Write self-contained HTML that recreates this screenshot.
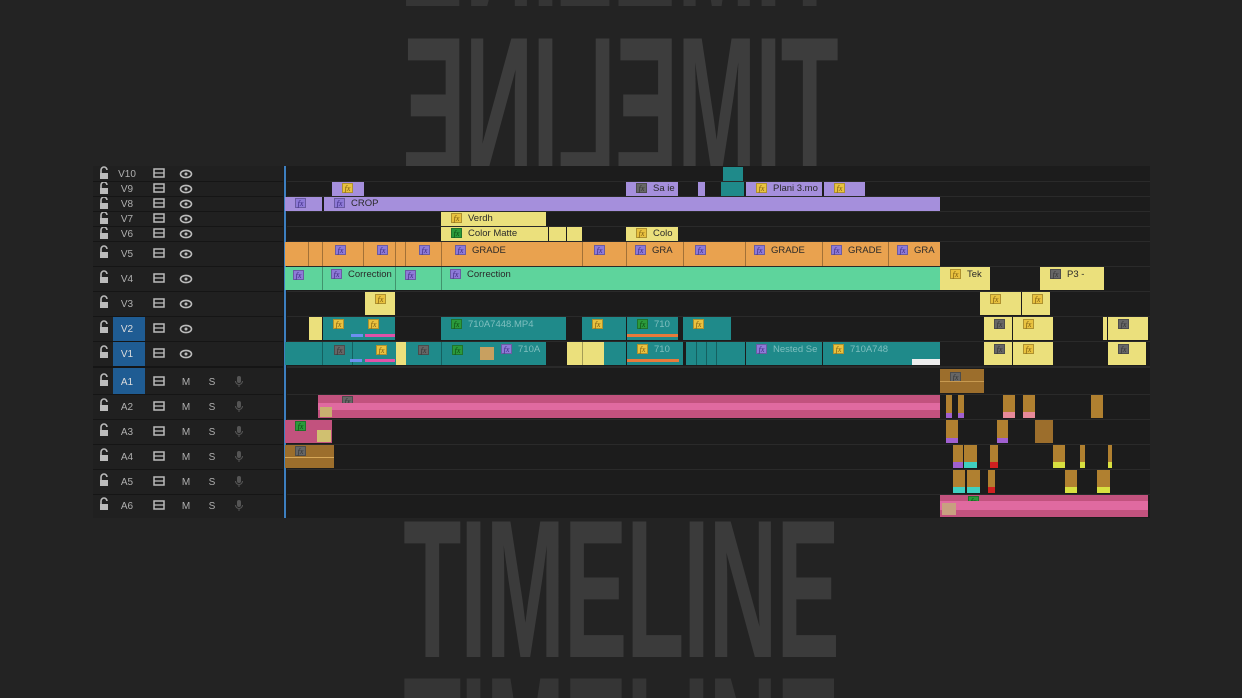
<!DOCTYPE html>
<html style="width:1242px;height:698px;overflow:hidden"><head><meta charset="utf-8"><style>
*{margin:0;padding:0;box-sizing:border-box}
body{width:1242px;height:698px;background:#232323;position:relative;overflow:hidden;font-family:"Liberation Sans",sans-serif}
.big{position:absolute;left:621px;font-weight:bold;font-size:197px;line-height:1;color:#3b3b3b;white-space:nowrap;letter-spacing:-2px}
.panel{position:absolute;left:93px;top:166px;width:1057px;height:352px;background:#1c1c1c}
.c{position:absolute;font-size:9.5px;color:#2a2a2a;white-space:nowrap;overflow:hidden;line-height:13px;padding-left:4px}
.f{display:inline-block;width:11px;height:10px;vertical-align:middle;margin:0 6px 1px 6px;border:1px solid rgba(0,0,0,.25);font-style:italic;font-size:8px;line-height:9px;text-align:center;font-family:"Liberation Serif",serif}
.y{background:#e9c23f;color:#7a5a10}.p{background:#8e7ad8;color:#3c2a80}.g{background:#2b9a3b;color:#0d4a12}.k{background:#666;color:#333}
.d{position:absolute;top:0;bottom:0;width:1px;background:rgba(0,0,0,.3)}
</style></head><body>

<div class="big" style="top:-160px;transform:translateX(-50%) scaleX(-0.482);color:#353535">TIMELINE</div>
<div class="big" style="top:8px;transform:translateX(-50%) scaleX(-0.482);color:#3d3d3d">TIMELINE</div>
<div class="big" style="top:491px;transform:translateX(-50%) scaleX(0.482)">TIMELINE</div>
<div class="big" style="top:648px;transform:translateX(-50%) scaleX(0.482);color:#353535">TIMELINE</div>

<div class="panel">
<div style="position:absolute;left:0;top:0;width:190px;height:352px;background:#202020"></div>
<div style="position:absolute;left:20px;top:150px;width:32px;height:50px;background:#1f5c93"></div>
<div style="position:absolute;left:20px;top:202px;width:32px;height:26px;background:#1f5c93"></div>
<div style="position:absolute;left:191px;top:0;width:2px;height:352px;background:#3d7fc0"></div>
</div>

<svg style="position:absolute;left:93px;top:166px" width="190" height="352" font-family="Liberation Sans" font-size="10">
<defs>
<g id="lk"><rect x="-4" y="-1" width="8" height="6" fill="#bbb"/><path d="M-3 -1 V-4 A3 3 0 0 1 3 -4" stroke="#bbb" stroke-width="1.6" fill="none"/></g>
<g id="tg"><rect x="-5" y="-4" width="10" height="8" fill="none" stroke="#bbb" stroke-width="1.5"/><path d="M-5 0H5" stroke="#bbb" stroke-width="1.3"/></g>
<g id="ey"><ellipse cx="0" cy="0" rx="5.5" ry="3.6" fill="none" stroke="#bbb" stroke-width="1.6"/><circle r="1.5" fill="#bbb"/></g>
<g id="mc"><rect x="-2" y="-5" width="4" height="7" rx="2" fill="#555"/><path d="M-3.5 0a3.5 3.5 0 0 0 7 0M0 3.5V6" stroke="#555" fill="none"/></g>
</defs>
<g fill="#b0b0b0" text-anchor="middle">
<use href="#lk" x="11" y="8"/><text x="34" y="11">V10</text><use href="#tg" x="66" y="7"/><use href="#ey" x="93" y="8"/>
<use href="#lk" x="11" y="23"/><text x="34" y="26">V9</text><use href="#tg" x="66" y="22"/><use href="#ey" x="93" y="23"/>
<use href="#lk" x="11" y="38"/><text x="34" y="41">V8</text><use href="#tg" x="66" y="37"/><use href="#ey" x="93" y="38"/>
<use href="#lk" x="11" y="53"/><text x="34" y="56">V7</text><use href="#tg" x="66" y="52"/><use href="#ey" x="93" y="53"/>
<use href="#lk" x="11" y="68"/><text x="34" y="71">V6</text><use href="#tg" x="66" y="67"/><use href="#ey" x="93" y="68"/>
<use href="#lk" x="11" y="87"/><text x="34" y="91">V5</text><use href="#tg" x="66" y="87"/><use href="#ey" x="93" y="88"/>
<use href="#lk" x="11" y="112"/><text x="34" y="116">V4</text><use href="#tg" x="66" y="112"/><use href="#ey" x="93" y="113"/>
<use href="#lk" x="11" y="137"/><text x="34" y="141">V3</text><use href="#tg" x="66" y="137"/><use href="#ey" x="93" y="138"/>
<use href="#lk" x="11" y="162"/><text x="34" y="166" fill="#ddd">V2</text><use href="#tg" x="66" y="162"/><use href="#ey" x="93" y="163"/>
<use href="#lk" x="11" y="187"/><text x="34" y="191" fill="#ddd">V1</text><use href="#tg" x="66" y="187"/><use href="#ey" x="93" y="188"/>
<use href="#lk" x="11" y="215"/><text x="34" y="219" fill="#ddd">A1</text><use href="#tg" x="66" y="215"/><text x="93" y="219">M</text><text x="119" y="219">S</text><use href="#mc" x="146" y="215"/>
<use href="#lk" x="11" y="240"/><text x="34" y="244">A2</text><use href="#tg" x="66" y="240"/><text x="93" y="244">M</text><text x="119" y="244">S</text><use href="#mc" x="146" y="240"/>
<use href="#lk" x="11" y="265"/><text x="34" y="269">A3</text><use href="#tg" x="66" y="265"/><text x="93" y="269">M</text><text x="119" y="269">S</text><use href="#mc" x="146" y="265"/>
<use href="#lk" x="11" y="290"/><text x="34" y="294">A4</text><use href="#tg" x="66" y="290"/><text x="93" y="294">M</text><text x="119" y="294">S</text><use href="#mc" x="146" y="290"/>
<use href="#lk" x="11" y="315"/><text x="34" y="319">A5</text><use href="#tg" x="66" y="315"/><text x="93" y="319">M</text><text x="119" y="319">S</text><use href="#mc" x="146" y="315"/>
<use href="#lk" x="11" y="339"/><text x="34" y="343">A6</text><use href="#tg" x="66" y="339"/><text x="93" y="343">M</text><text x="119" y="343">S</text><use href="#mc" x="146" y="339"/>
</g>
<g fill="#151515">
<rect y="15" width="190" height="1"/><rect y="30" width="190" height="1"/><rect y="45" width="190" height="1"/><rect y="60" width="190" height="1"/><rect y="75" width="190" height="1"/><rect y="100" width="190" height="1"/><rect y="125" width="190" height="1"/><rect y="150" width="190" height="1"/><rect y="175" width="190" height="1"/><rect y="200" width="190" height="2"/><rect y="228" width="190" height="1"/><rect y="253" width="190" height="1"/><rect y="278" width="190" height="1"/><rect y="303" width="190" height="1"/><rect y="328" width="190" height="1"/>
</g>
</svg>

<svg style="position:absolute;left:287px;top:166px" width="863" height="352"><g fill="#2a2a2a">
<rect y="15" width="863" height="1"/><rect y="30" width="863" height="1"/><rect y="45" width="863" height="1"/><rect y="60" width="863" height="1"/><rect y="75" width="863" height="1"/><rect y="100" width="863" height="1"/><rect y="125" width="863" height="1"/><rect y="150" width="863" height="1"/><rect y="175" width="863" height="1"/><rect y="200" width="863" height="2"/><rect y="228" width="863" height="1"/><rect y="253" width="863" height="1"/><rect y="278" width="863" height="1"/><rect y="303" width="863" height="1"/><rect y="328" width="863" height="1"/></g></svg>

<!-- V10 -->
<div class="c" style="left:723px;top:167px;width:20px;height:14px;background:#1f8a8a"></div>
<!-- V9 -->
<div class="c" style="left:332px;top:182px;width:32px;height:14px;background:#a58fdc"><span class="f y">fx</span></div>
<div class="c" style="left:626px;top:182px;width:52px;height:14px;background:#a58fdc"><span class="f k">fx</span>Sa ie</div>
<div class="c" style="left:698px;top:182px;width:7px;height:14px;background:#a58fdc"></div>
<div class="c" style="left:721px;top:182px;width:23px;height:14px;background:#1f8a8a"></div>
<div class="c" style="left:746px;top:182px;width:76px;height:14px;background:#a58fdc"><span class="f y">fx</span>Plani 3.mo</div>
<div class="c" style="left:824px;top:182px;width:41px;height:14px;background:#a58fdc"><span class="f y">fx</span></div>
<!-- V8 -->
<div class="c" style="left:285px;top:197px;width:37px;height:14px;background:#a58fdc"><span class="f p">fx</span></div>
<div class="c" style="left:324px;top:197px;width:616px;height:14px;background:#a58fdc"><span class="f p">fx</span>CROP</div>
<!-- V7 -->
<div class="c" style="left:441px;top:212px;width:105px;height:14px;background:#ebe07c"><span class="f y">fx</span>Verdh</div>
<!-- V6 -->
<div class="c" style="left:441px;top:227px;width:107px;height:14px;background:#ebe07c"><span class="f g">fx</span>Color Matte</div>
<div class="c" style="left:549px;top:227px;width:17px;height:14px;background:#ebe07c"></div>
<div class="c" style="left:567px;top:227px;width:15px;height:14px;background:#ebe07c"></div>
<div class="c" style="left:626px;top:227px;width:52px;height:14px;background:#ebe07c"><span class="f y">fx</span>Colo</div>
<!-- V5 -->
<div class="c" style="left:285px;top:242px;width:655px;height:24px;background:#e9a24f;line-height:17px">
<div class="d" style="left:23px"></div><div class="d" style="left:37px"></div><div class="d" style="left:78px"></div><div class="d" style="left:110px"></div><div class="d" style="left:120px"></div><div class="d" style="left:156px"></div><div class="d" style="left:297px"></div><div class="d" style="left:341px"></div><div class="d" style="left:398px"></div><div class="d" style="left:460px"></div><div class="d" style="left:537px"></div><div class="d" style="left:603px"></div>
<span class="f p" style="position:absolute;left:44px;top:3px">fx</span><span class="f p" style="position:absolute;left:86px;top:3px">fx</span><span class="f p" style="position:absolute;left:128px;top:3px">fx</span>
<span style="position:absolute;left:164px"><span class="f p">fx</span>GRADE</span>
<span class="f p" style="position:absolute;left:303px;top:3px">fx</span>
<span style="position:absolute;left:344px"><span class="f p">fx</span>GRA</span>
<span class="f p" style="position:absolute;left:404px;top:3px">fx</span>
<span style="position:absolute;left:463px"><span class="f p">fx</span>GRADE</span>
<span style="position:absolute;left:540px"><span class="f p">fx</span>GRADE</span>
<span style="position:absolute;left:606px"><span class="f p">fx</span>GRA</span>
</div>
<!-- V4 -->
<div class="c" style="left:285px;top:267px;width:655px;height:23px;background:#5ed49c;line-height:16px">
<div class="d" style="left:37px"></div><div class="d" style="left:110px"></div><div class="d" style="left:156px"></div>
<span class="f p" style="position:absolute;left:2px;top:3px">fx</span>
<span style="position:absolute;left:40px"><span class="f p">fx</span>Correction</span>
<span class="f p" style="position:absolute;left:114px;top:3px">fx</span>
<span style="position:absolute;left:159px"><span class="f p">fx</span>Correction</span>
</div>
<div class="c" style="left:940px;top:267px;width:50px;height:23px;background:#ebe07c;line-height:16px"><span class="f y">fx</span>Tek</div>
<div class="c" style="left:1040px;top:267px;width:64px;height:23px;background:#ebe07c;line-height:16px"><span class="f k">fx</span>P3 -</div>
<!-- V3 -->
<div class="c" style="left:365px;top:292px;width:30px;height:23px;background:#ebe07c;line-height:16px"><span class="f y">fx</span></div>
<div class="c" style="left:980px;top:292px;width:41px;height:23px;background:#ebe07c;line-height:16px"><span class="f y">fx</span></div>
<div class="c" style="left:1022px;top:292px;width:28px;height:23px;background:#ebe07c;line-height:16px"><span class="f y">fx</span></div>
<!-- V2 -->
<div class="c" style="left:309px;top:317px;width:13px;height:23px;background:#ebe07c"></div>
<div class="c" style="left:323px;top:317px;width:72px;height:23px;background:#1f8a8a;line-height:16px"><span class="f y">fx</span><span class="f y" style="margin-left:18px">fx</span>
<div style="position:absolute;left:28px;bottom:3px;width:12px;height:3px;background:#6d8ff0"></div><div style="position:absolute;left:42px;bottom:3px;width:30px;height:3px;background:#e052a8"></div></div>
<div class="c" style="left:441px;top:317px;width:125px;height:23px;background:#1f8a8a;line-height:16px;color:#7fbfbf"><span class="f g">fx</span>710A7448.MP4</div>
<div class="c" style="left:582px;top:317px;width:44px;height:23px;background:#1f8a8a;line-height:16px"><span class="f y">fx</span></div>
<div class="c" style="left:627px;top:317px;width:51px;height:23px;background:#1f8a8a;line-height:16px;color:#7fbfbf"><span class="f g">fx</span>710<div style="position:absolute;left:0;right:0;bottom:3px;height:3px;background:#e87a3a"></div></div>
<div class="c" style="left:683px;top:317px;width:48px;height:23px;background:#1f8a8a;line-height:16px"><span class="f y">fx</span></div>
<div class="c" style="left:984px;top:317px;width:28px;height:23px;background:#ebe07c;line-height:16px"><span class="f k">fx</span></div>
<div class="c" style="left:1013px;top:317px;width:40px;height:23px;background:#ebe07c;line-height:16px"><span class="f y">fx</span></div>
<div class="c" style="left:1103px;top:317px;width:3px;height:23px;background:#ebe07c"></div>
<div class="c" style="left:1108px;top:317px;width:40px;height:23px;background:#ebe07c;line-height:16px"><span class="f k">fx</span></div>
<!-- V1 -->
<div class="c" style="left:285px;top:342px;width:261px;height:23px;background:#1f8a8a;line-height:16px;color:#7fbfbf">
<div class="d" style="left:37px"></div><div class="d" style="left:67px"></div><div class="d" style="left:156px"></div>
<div style="position:absolute;left:111px;top:0;width:10px;height:23px;background:#ebe07c"></div>
<span class="f k" style="position:absolute;left:43px;top:3px">fx</span><span class="f y" style="position:absolute;left:85px;top:3px">fx</span><span class="f k" style="position:absolute;left:127px;top:3px">fx</span><span class="f g" style="position:absolute;left:161px;top:3px">fx</span>
<div style="position:absolute;left:195px;top:5px;width:14px;height:13px;background:#c8a060"></div>
<span style="position:absolute;left:210px"><span class="f p">fx</span>710A</span>
<div style="position:absolute;left:65px;bottom:3px;width:12px;height:3px;background:#6d8ff0"></div><div style="position:absolute;left:80px;bottom:3px;width:30px;height:3px;background:#e052a8"></div>
</div>
<div class="c" style="left:567px;top:342px;width:37px;height:23px;background:#ebe07c"><div class="d" style="left:15px"></div></div>
<div class="c" style="left:604px;top:342px;width:22px;height:23px;background:#1f8a8a"></div>
<div class="c" style="left:627px;top:342px;width:56px;height:23px;background:#1f8a8a;line-height:16px;color:#7fbfbf"><span class="f y">fx</span>710<div style="position:absolute;left:0;right:4px;bottom:3px;height:3px;background:#e87a3a"></div></div>
<div class="c" style="left:686px;top:342px;width:59px;height:23px;background:#1f8a8a"><div class="d" style="left:10px"></div><div class="d" style="left:20px"></div><div class="d" style="left:30px"></div></div>
<div class="c" style="left:746px;top:342px;width:76px;height:23px;background:#1f8a8a;line-height:16px;color:#7fbfbf"><span class="f p">fx</span>Nested Se</div>
<div class="c" style="left:823px;top:342px;width:117px;height:23px;background:#1f8a8a;line-height:16px;color:#7fbfbf"><span class="f y">fx</span>710A748<div style="position:absolute;left:89px;right:0;bottom:0;height:6px;background:#eee"></div></div>
<div class="c" style="left:984px;top:342px;width:28px;height:23px;background:#ebe07c;line-height:16px"><span class="f k">fx</span></div>
<div class="c" style="left:1013px;top:342px;width:40px;height:23px;background:#ebe07c;line-height:16px"><span class="f y">fx</span></div>
<div class="c" style="left:1108px;top:342px;width:38px;height:23px;background:#ebe07c;line-height:16px"><span class="f k">fx</span></div>
<!-- audio -->
<div class="c" style="left:940px;top:369px;width:44px;height:24px;background:#9c6e2c;line-height:18px"><span class="f k">fx</span><div style="position:absolute;left:0;right:0;top:12px;height:1px;background:#c89a50"></div></div>
<div class="c" style="left:318px;top:395px;width:622px;height:23px;background:#c2527e;line-height:14px"><span class="f k" style="margin-left:20px">fx</span>
<div style="position:absolute;left:0;right:0;top:8px;height:7px;background:#e06aa0"></div><div style="position:absolute;left:2px;top:12px;width:12px;height:10px;background:#c8b070"></div></div>
<div class="c" style="left:285px;top:420px;width:47px;height:23px;background:#c2527e;line-height:14px"><span class="f g" style="margin-left:6px">fx</span><div style="position:absolute;left:32px;top:10px;width:14px;height:12px;background:#d0c070"></div></div>
<div class="c" style="left:285px;top:445px;width:49px;height:23px;background:#9c6e2c;line-height:14px"><span class="f k">fx</span><div style="position:absolute;left:0;right:0;top:12px;height:1px;background:#d8a858"></div></div>
<div class="c" style="left:940px;top:495px;width:208px;height:22px;background:#c2527e;line-height:14px"><span class="f g" style="margin-left:24px">fx</span><div style="position:absolute;left:0;right:0;top:6px;height:9px;background:#e06aa0"></div><div style="position:absolute;left:2px;top:8px;width:14px;height:12px;background:#c8a080"></div></div>
<!-- small audio clips -->
<div class="c" style="left:946px;top:395px;width:6px;height:23px;background:#b08030;border-bottom:5px solid #a060d0"></div>
<div class="c" style="left:958px;top:395px;width:6px;height:23px;background:#b08030;border-bottom:5px solid #a060d0"></div>
<div class="c" style="left:1003px;top:395px;width:12px;height:23px;background:#b08030;border-bottom:6px solid #e88a9a"></div>
<div class="c" style="left:1023px;top:395px;width:12px;height:23px;background:#b08030;border-bottom:6px solid #e88a9a"></div>
<div class="c" style="left:1091px;top:395px;width:12px;height:23px;background:#b08030"></div>
<div class="c" style="left:946px;top:420px;width:12px;height:23px;background:#b08030;border-bottom:5px solid #a060d0"></div>
<div class="c" style="left:997px;top:420px;width:11px;height:23px;background:#b08030;border-bottom:5px solid #a060d0"></div>
<div class="c" style="left:1035px;top:420px;width:18px;height:23px;background:#9c6e2c"></div>
<div class="c" style="left:953px;top:445px;width:10px;height:23px;background:#b08030;border-bottom:6px solid #a060d0"></div>
<div class="c" style="left:964px;top:445px;width:13px;height:23px;background:#b08030;border-bottom:6px solid #40d0c0"></div>
<div class="c" style="left:990px;top:445px;width:8px;height:23px;background:#b08030;border-bottom:6px solid #d02020"></div>
<div class="c" style="left:1053px;top:445px;width:12px;height:23px;background:#b08030;border-bottom:6px solid #d8e040"></div>
<div class="c" style="left:1080px;top:445px;width:5px;height:23px;background:#b08030;border-bottom:6px solid #d8e040"></div>
<div class="c" style="left:1108px;top:445px;width:3px;height:23px;background:#b08030;border-bottom:6px solid #d8e040"></div>
<div class="c" style="left:953px;top:470px;width:12px;height:23px;background:#b08030;border-bottom:6px solid #40d0c0"></div>
<div class="c" style="left:967px;top:470px;width:13px;height:23px;background:#b08030;border-bottom:6px solid #40d0c0"></div>
<div class="c" style="left:988px;top:470px;width:7px;height:23px;background:#b08030;border-bottom:6px solid #d02020"></div>
<div class="c" style="left:1065px;top:470px;width:12px;height:23px;background:#b08030;border-bottom:6px solid #d8e040"></div>
<div class="c" style="left:1097px;top:470px;width:13px;height:23px;background:#b08030;border-bottom:6px solid #d8e040"></div>
</body></html>
